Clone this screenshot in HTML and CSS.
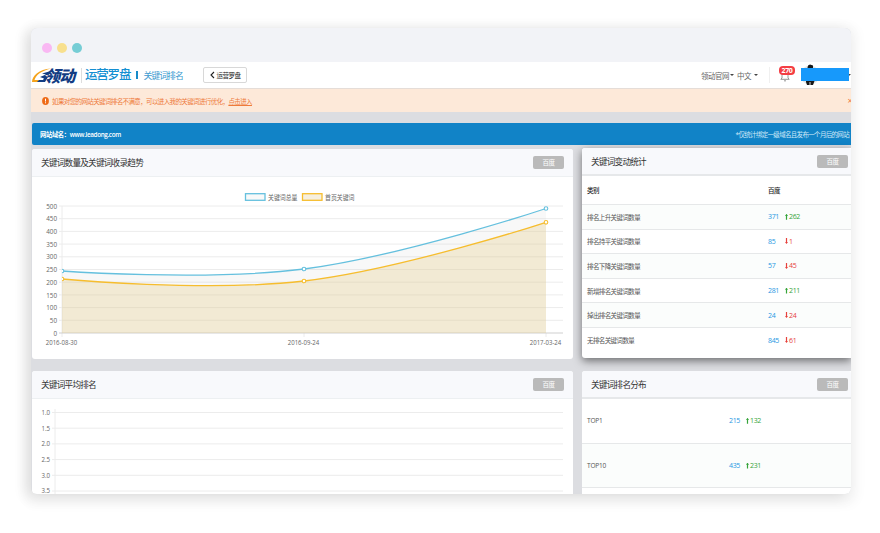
FILE: index.html
```html
<!DOCTYPE html>
<html lang="zh-CN">
<head>
    <meta charset="UTF-8">
    <meta name="viewport" content="width=device-width, initial-scale=1.0">
    <title>关键词排名</title>
    <link rel="stylesheet" href="styles.css">
</head>
<body>
    <div class="window">
        <div class="titlebar">
            <span class="dot pink"></span>
            <span class="dot yellow"></span>
            <span class="dot teal"></span>
        </div>

        <div class="header">
            <div class="logo">
                <svg class="swoosh" width="22" height="17" viewBox="0 0 22 17">
                    <path d="M1 15C1 9 8 2 20 1.500C10 4 5 8 3.500 13H8L7 15Z" fill="#f5a31b"/>
                    <path d="M11 6.500L20 4L18 7.500L14 8.500L17 10L14 15H6L8 13H12L13 11.500L9 10L15 7.500Z" fill="#123c83"/>
                </svg>
                <span class="logo-name">领动</span>
                <span class="logo-product">运营罗盘</span>
            </div>
            <span class="page-name">关键词排名</span>
            <button class="back">
                <svg width="5" height="8" viewBox="0 0 5 8"><path d="M4 1L1 4L4 7" fill="none" stroke="#222" stroke-width="1.1"/></svg>
                <span>运营罗盘</span>
            </button>
            <div class="nav">
                <span>领动官网</span><i class="caret"></i>
                <span class="lang">中文</span><i class="caret"></i>
            </div>
            <div class="user">
                <div class="bell">
                    <svg width="10" height="11" viewBox="0 0 10 11"><path d="M5 1C3 1 2 2.500 2 4.500V7L.8 8.300H9.200L8 7V4.500C8 2.500 7 1 5 1ZM4 9.500Q5 10.800 6 9.500" fill="none" stroke="#888" stroke-width=".9"/></svg>
                    <span class="badge">270</span>
                </div>
                <div class="avatar">
                    <svg width="18" height="22" viewBox="0 0 18 22">
                        <circle cx="9" cy="11" r="9.500" fill="#e4e6e3"/>
                        <path d="M6 6L7 1.500L9 .5L12 1.500V8H6ZM5 15L6 13H13L13.500 17L12 21H6L5 18Z" fill="#161718"/>
                        <path d="M8 18H10V21H8Z" fill="#777"/>
                    </svg>
                    <span class="name-mask"></span>
                </div>
                <i class="caret"></i>
            </div>
        </div>

        <div class="alert">
            <svg width="7" height="8" viewBox="0 0 7 8"><ellipse cx="3.500" cy="4" rx="3.400" ry="3.900" fill="#ee6a16"/><path d="M3.500 1.700V4.500M3.500 5.300V6.300" stroke="#fff" stroke-width="1"/></svg>
            <p>如果对您的网站关键词排名不满意，可以进入我的关键词进行优化，<a href="#">点击进入</a></p>
            <span class="close">×</span>
        </div>

        <div class="domain">
            <b>网站域名：www.leadong.com</b>
            <span class="note">*仅统计绑定一级域名且发布一个月后的网站</span>
        </div>

        <div class="cards">
            <div class="column">
                <div class="card trend">
                    <div class="card-head"><h2>关键词数量及关键词收录趋势</h2><span class="tag">百度</span></div>
                    <svg id="trend" class="chart" width="541" height="182" viewBox="32 177 541 182"></svg>
                </div>
                <div class="card">
                    <div class="card-head"><h2>关键词平均排名</h2><span class="tag">百度</span></div>
                    <svg id="average" class="chart" width="541" height="110" viewBox="32 399 541 110"></svg>
                </div>
            </div>
            <div class="column side">
                <div class="card raised">
                    <div class="card-head"><h2>关键词变动统计</h2><span class="tag">百度</span></div>
                    <div class="row title"><span>类别</span><span>百度</span></div>
                    <div class="row odd"><span>排名上升关键词数量</span><a>371</a><em class="up">262</em></div>
                    <div class="row"><span>排名持平关键词数量</span><a>85</a><em class="down">1</em></div>
                    <div class="row odd"><span>排名下降关键词数量</span><a>57</a><em class="down">45</em></div>
                    <div class="row"><span>新增排名关键词数量</span><a>281</a><em class="up">211</em></div>
                    <div class="row odd"><span>掉出排名关键词数量</span><a>24</a><em class="down">24</em></div>
                    <div class="row"><span>无排名关键词数量</span><a>845</a><em class="down">61</em></div>
                </div>
                <div class="card ranks">
                    <div class="card-head"><h2>关键词排名分布</h2><span class="tag">百度</span></div>
                    <div class="row"><span>TOP1</span><a>215</a><em class="up">132</em></div>
                    <div class="row odd"><span>TOP10</span><a>435</a><em class="up">231</em></div>
                    <div class="row"></div>
                </div>
            </div>
        </div>
    </div>

    <script>
        function text(x, y, str, anchor, width) {
            var fit = width ? ' textLength="' + width + '" lengthAdjust="spacingAndGlyphs"' : '';
            return '<text x="' + x + '" y="' + y + '" text-anchor="' + anchor + '"' + fit + '>' + str + '</text>';
        }

        function drawTrend() {
            var out = '<path class="grid" d="M62 206V337M304 333V337M546 333V337"/>';
            for (var i = 0; i <= 10; i++) {
                var y = 206 + i * 12.7;
                out += '<path class="' + (i == 10 ? 'axis' : 'grid') + '" d="M59 ' + y + 'H563"/>';
                var label = String(500 - i * 50);
                out += text(57, y + 2.6, label, 'end', label.length * 3.6);
            }
            var blue = 'M62 271C62 271 207 281.5 304 269C401 256.5 546 208.5 546 208.5';
            var gold = 'M62 279C62 279 207 292.4 304 281C401 269.6 546 222.3 546 222.3';
            out += '<path class="fill-blue" d="' + blue + 'V333H62Z"/><path class="fill-gold" d="' + gold + 'V333H62Z"/>';
            out += '<path class="blue" d="' + blue + '"/><path class="gold" d="' + gold + '"/>';
            [[62, 271, 279], [304, 269, 281], [546, 208.5, 222.3]].forEach(function (p) {
                // the first marker is cut by the left edge of the plot
                var shape = p[0] == 62 ? 'M62 -1.8A1.8 1.8 0 0 1 62 1.8' : 'M' + (p[0] - 1.8) + ' 0a1.8 1.8 0 1 1 3.6 0a1.8 1.8 0 1 1 -3.6 0';
                out += '<path class="blue point" transform="translate(0 ' + p[1] + ')" d="' + shape + '"/>';
                out += '<path class="gold point" transform="translate(0 ' + p[2] + ')" d="' + shape + '"/>';
            });
            out += '<rect class="blue key" x="245.5" y="193.700" width="19.5" height="6.600"/>' + text(268, 199.700, '关键词总量', 'start', 29.5);
            out += '<rect class="gold key" x="302.500" y="193.700" width="19.5" height="6.600"/>' + text(325, 199.700, '首页关键词', 'start', 29.5);
            out += text(61.5, 344.600, '2016-08-30', 'middle', 31.5) + text(303.5, 344.600, '2016-09-24', 'middle', 31.5) + text(545.5, 344.600, '2017-03-24', 'middle', 31.5);
            document.getElementById('trend').innerHTML = out;
        }

        function drawAverage() {
            var out = '<path class="grid" d="M55 409V508"/>';
            for (var i = 0; i < 6; i++) {
                var y = 412.5 + i * 15.7;
                out += '<path class="grid" d="M52 ' + y + 'H563"/>' + text(50, y + 2.4, (1 + i * 0.5).toFixed(1), 'end', 8.6);
            }
            document.getElementById('average').innerHTML = out;
        }

        drawTrend();
        drawAverage();
    </script>
</body>
</html>
```
FILE: styles.css
```css
* {
    box-sizing: border-box;
}

body {
    margin: 0;
    padding: 28px 29px 0 31px;
    height: 533px;
    overflow: hidden;
    background-color: #fff;
    font-family: "Open Sans", "Noto Sans CJK SC", sans-serif;
    font-size: 6.5px;
    color: #555;
    text-spacing-trim: space-all;
}

h2, p {
    margin: 0;
    font-weight: normal;
}

.window {
    height: 466px;
    overflow: hidden;
    border-radius: 6px;
    background-color: #dcdde1;
    box-shadow: -4px 3px 14px rgba(0, 0, 0, 0.13), 0 4px 10px 9px rgba(0, 0, 0, 0.025);
}

.titlebar {
    height: 34px;
    padding: 5px 0 0 11px;
    display: flex;
    align-items: center;
    gap: 5px;
    background-color: #f2f3f7;
}

.dot {
    width: 10px;
    height: 10px;
    border-radius: 50%;
}

.pink { background-color: #f9b8f3; }
.yellow { background-color: #f8e08e; }
.teal { background-color: #76cdd5; }

.header {
    height: 26px;
    display: flex;
    align-items: center;
    background-color: #fff;
    white-space: nowrap;
}

.logo {
    display: flex;
    align-items: center;
    width: 106px;
    height: 15px;
}

.swoosh {
    flex: none;
    margin-right: -7px;
}

.logo-name {
    width: 32px;
    font-size: 16px;
    font-weight: 900;
    letter-spacing: -1px;
    color: #123c83;
    transform: skewX(-14deg);
}

.logo-product {
    height: 15px;
    line-height: 14px;
    margin-left: 3px;
    padding-left: 3px;
    border-left: 1px solid #ddd;
    font-size: 12.5px;
    font-weight: 500;
    letter-spacing: -1.2px;
    color: #148fd2;
}

.page-name {
    width: 66px;
    padding-left: 6px;
    font-size: 8.8px;
    letter-spacing: -0.95px;
    color: #3d9bd0;
}

.page-name::before {
    content: "";
    display: inline-block;
    width: 1.5px;
    height: 8px;
    margin-left: -7px;
    margin-right: 6px;
    background-color: #178bc8;
}

.back {
    width: 44px;
    height: 16px;
    padding: 0;
    display: flex;
    align-items: center;
    justify-content: center;
    gap: 2px;
    border: 1px solid #d8d8d8;
    border-radius: 2px;
    background-color: #fff;
    font: 6.5px "Noto Sans CJK SC", sans-serif;
    letter-spacing: -0.55px;
    color: #222;
}

.nav {
    display: flex;
    align-items: center;
    width: 69px;
    height: 16px;
    margin-left: auto;
    border-right: 1px solid #f0f0f0;
    font-size: 7.5px;
    letter-spacing: -0.5px;
    color: #666;
}

.lang {
    margin-left: 3px;
}

.caret {
    flex: none;
    margin-left: 2px;
    border: 2px solid transparent;
    border-top-color: #444;
    border-bottom: 0;
}

.nav .caret {
    margin-left: 1px;
}

.nav .lang + .caret {
    margin-left: 3px;
}

.user {
    display: flex;
    align-items: center;
    width: 81px;
}

.bell {
    position: relative;
    width: 22px;
    height: 13px;
    margin-left: 10px;
}

.bell svg {
    margin-top: 2px;
}

.badge {
    position: absolute;
    left: -1px;
    top: -3px;
    width: 16px;
    height: 9px;
    line-height: 9px;
    border-radius: 4px;
    background-color: #f43d43;
    text-align: center;
    font-size: 7px;
    font-weight: bold;
    letter-spacing: -0.3px;
    color: #fff;
}

.avatar {
    position: relative;
    width: 49px;
    height: 22px;
}

.name-mask {
    position: absolute;
    left: 0;
    top: 4px;
    width: 48px;
    height: 13px;
    background-color: #1799fb;
}

.user > .caret {
    margin-left: -2px;
}

.alert {
    height: 24px;
    display: flex;
    align-items: center;
    gap: 3px;
    padding-left: 11px;
    border-top: 1px solid #e5ddd8;
    background-color: #fde9d9;
    letter-spacing: -0.62px;
    color: #ee7a3a;
    white-space: nowrap;
}

.alert a {
    color: inherit;
}

.close {
    margin-left: auto;
    margin-right: -1px;
    font-size: 9px;
}

.domain {
    height: 22px;
    margin: 11px 0 4px 1px;
    padding: 0 2px 0 8px;
    display: flex;
    align-items: center;
    justify-content: space-between;
    border-radius: 2px 0 0 2px;
    background-color: #1183c7;
    color: #fff;
}

.domain b {
    font-size: 6.3px;
    font-weight: 600;
    letter-spacing: -0.34px;
}

.note {
    letter-spacing: -0.68px;
    color: #cfe8f7;
}

.cards {
    display: flex;
    gap: 9px;
    padding-left: 1px;
}

.column {
    flex: none;
    width: 541px;
    display: flex;
    flex-direction: column;
    gap: 12px;
}

.side {
    width: 269px;
    margin-top: -1px;
    gap: 13px;
}

.card {
    border-radius: 3px;
    background-color: #fff;
}

.trend {
    height: 210px;
}

.side .card {
    border-radius: 3px 0 0 3px;
}

.raised {
    height: 210px;
    box-shadow: 0 3px 8px rgba(0, 0, 0, 0.5);
}

.card-head {
    height: 28px;
    padding: 0 9px;
    display: flex;
    align-items: center;
    justify-content: space-between;
    border-bottom: 1px solid #edf0f2;
    border-radius: 3px 3px 0 0;
    background-color: #f8f9fc;
}

.side .card-head {
    padding-right: 3px;
    border-bottom: 2px solid #e6e8ea;
}

h2 {
    font-size: 8.6px;
    letter-spacing: -0.75px;
    color: #333;
}

.tag {
    width: 31px;
    height: 13px;
    line-height: 13px;
    border-radius: 2px;
    background-color: #bababa;
    text-align: center;
    letter-spacing: -0.5px;
    color: #fff;
}

.chart {
    display: block;
    font-size: 6.8px;
    letter-spacing: 0;
}

.chart text { fill: #666; }
.chart path, .chart rect { fill: none; }
.grid { stroke: #ececec; }
.axis { stroke: #cfcfcf; }
.blue { stroke: #65c0de; stroke-width: 1.3; }
.gold { stroke: #f6bd2e; stroke-width: 1.3; }
.chart .point { fill: #fff; stroke-width: 1.1; }
.chart .fill-blue { fill: rgba(200, 200, 200, 0.12); }
.chart .fill-gold { fill: rgba(232, 205, 140, 0.33); }
.chart .blue.key { fill: #f8f9f9; }
.chart .gold.key { fill: #f6efdf; }

.row {
    height: 24.6px;
    padding: 0 5px;
    display: grid;
    grid-template-columns: 181px 17px 1fr;
    align-items: center;
    border-bottom: 1px solid #e6e8e9;
    letter-spacing: -0.6px;
}

.row:last-child {
    border-bottom: 0;
}

.title {
    height: 29px;
    color: #222;
    font-weight: 500;
    white-space: nowrap;
}

.odd {
    background-color: #fbfdfc;
}

.row a, .row em {
    font-size: 7px;
    letter-spacing: -0.35px;
    color: #1f98e3;
}

.row em {
    display: flex;
    align-items: center;
    font-style: normal;
}

/* thin arrow in the colour of its number */
.up::before, .down::before {
    content: "";
    width: 3px;
    height: 6px;
    margin-right: 1px;
    background-color: currentColor;
    clip-path: polygon(50% 0, 100% 35%, 70% 35%, 70% 100%, 30% 100%, 30% 35%, 0 35%);
}

.down::before {
    transform: rotate(180deg);
}

.row .up { color: #35a43a; }
.row .down { color: #e6403d; }

.ranks .row {
    height: 44.7px;
    grid-template-columns: 142px 17px 1fr;
    letter-spacing: -0.2px;
}
```
